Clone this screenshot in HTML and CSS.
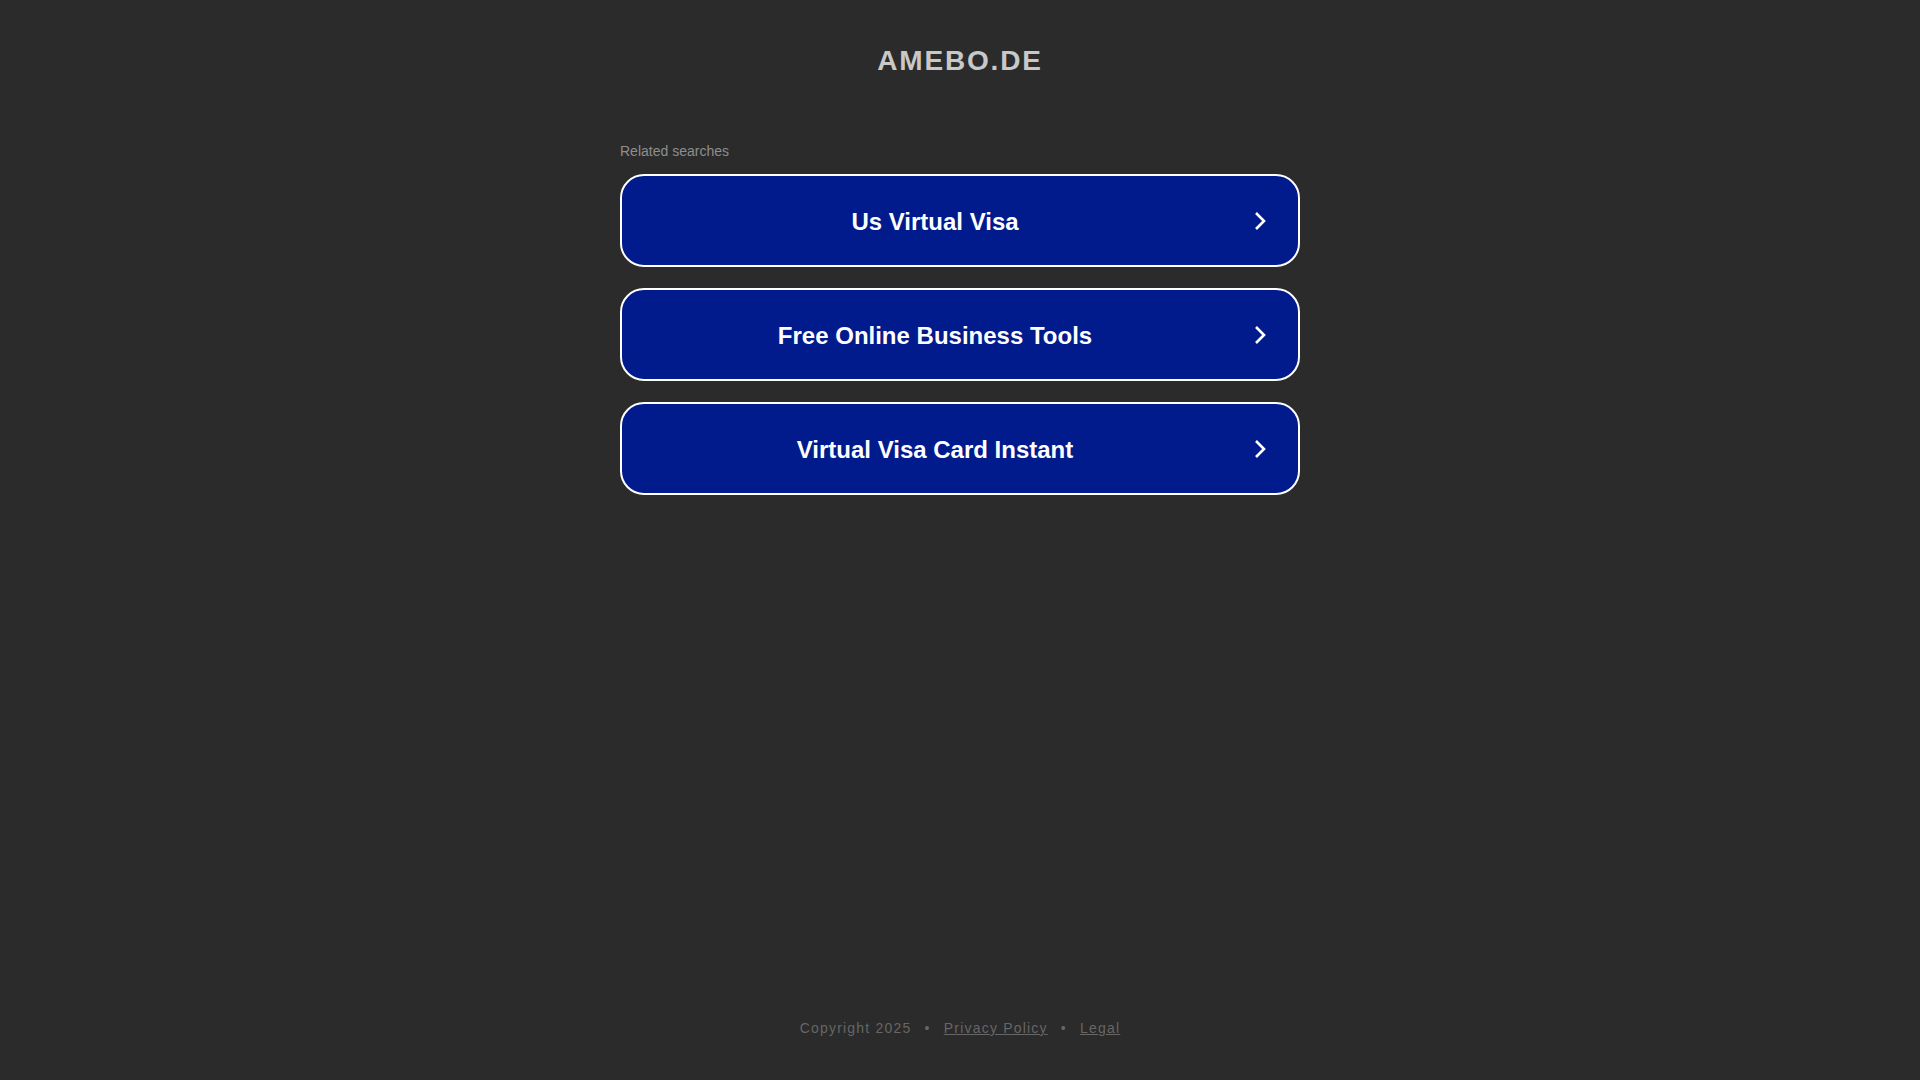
FILE: index.html
```html
<!DOCTYPE html>
<html>
<head>
	<meta charset="utf-8">
	<title>amebo.de</title>
	<link rel="stylesheet" href="styles.css">
</head>
<body>
	<div class="page">
		<!-- domain name -->
		<h1 class="domain">AMEBO.DE</h1>
		<!-- related search links -->
		<div class="related">
			<p class="related-title">Related searches</p>
			<a class="search-link" href="#">
				<span class="search-text">Us Virtual Visa</span>
				<svg class="arrow" width="12" height="20" viewBox="0 0 12 20"><path d="M2 2 L10 10 L2 18" fill="none" stroke="#fff" stroke-width="2.6"/></svg>
			</a>
			<a class="search-link" href="#">
				<span class="search-text">Free Online Business Tools</span>
				<svg class="arrow" width="12" height="20" viewBox="0 0 12 20"><path d="M2 2 L10 10 L2 18" fill="none" stroke="#fff" stroke-width="2.6"/></svg>
			</a>
			<a class="search-link" href="#">
				<span class="search-text">Virtual Visa Card Instant</span>
				<svg class="arrow" width="12" height="20" viewBox="0 0 12 20"><path d="M2 2 L10 10 L2 18" fill="none" stroke="#fff" stroke-width="2.6"/></svg>
			</a>
		</div>
		<!-- footer -->
		<div class="footer">
			<span>Copyright 2025</span>
			<span class="dot">•</span>
			<a href="#">Privacy Policy</a>
			<span class="dot">•</span>
			<a href="#">Legal</a>
		</div>
	</div>
</body>
</html>
```

FILE: styles.css
```css
*{margin: 0px;padding: 0px;box-sizing: border-box;}
body{
	background: #2b2b2b;
	font-family: "Liberation Sans", Arial, sans-serif;
}
.page{
	display: flex;
	flex-direction: column;
	align-items: center;
	min-height: 100vh;
}
.domain{
	margin-top: 45px;
	height: 32px;
	line-height: 32px;
	font-size: 28px;
	font-weight: bold;
	letter-spacing: 1.8px;
	color: #c8c8c8;
}
.related{
	width: 680px;
	margin-top: 66px;
}
.related-title{
	height: 16px;
	line-height: 16px;
	font-size: 14px;
	color: #8e8e8e;
	margin-bottom: 15px;
}
.search-link{
	display: flex;
	align-items: center;
	height: 93px;
	margin-bottom: 21px;
	padding-right: 32px;
	background: #011a8c;
	border: 2px solid #fff;
	border-radius: 24px;
	text-decoration: none;
}
.search-text{
	flex: 1;
	text-align: center;
	padding-top: 2px;
	font-size: 24px;
	font-weight: bold;
	color: #fff;
}
.arrow{
	margin-left: 6px;
	flex-shrink: 0;
}
.footer{
	margin-top: auto;
	margin-bottom: 44px;
	font-size: 14px;
	letter-spacing: 1.2px;
	color: #666;
}
.footer a{
	color: #666;
}
.footer .dot{
	margin: 0px 8px;
}
```
